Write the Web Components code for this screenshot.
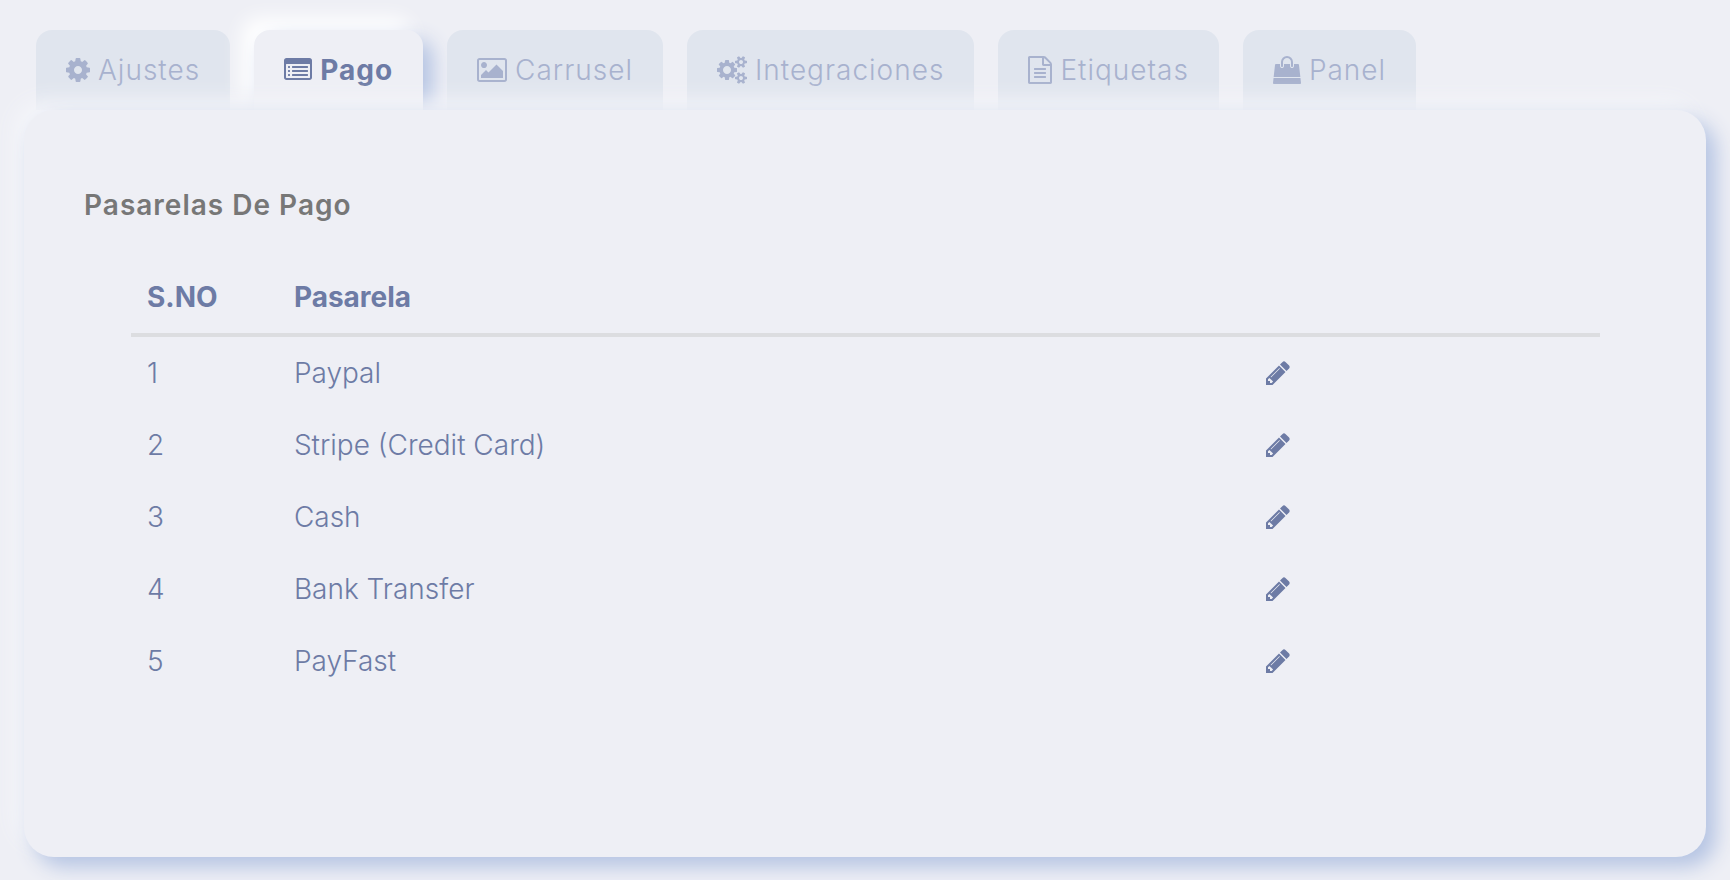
<!DOCTYPE html>
<html lang="es">
<head>
<meta charset="utf-8">
<meta name="viewport" content="width=device-width, initial-scale=1">
<title>Pasarelas De Pago</title>
<style>
    body {
        --bg: #eeeff5;
        --tab: #e0e5ee;
        --muted: #a8b2ce;
        --accent: #6d7ba5;
        --shade: #b5c4e3;
        --glow: #f4f5f9;
        margin: 0;
        background: var(--bg);
        color: var(--accent);
        font-family: Inter, "Open Sans", sans-serif;
        font-size: 28px;
        line-height: 40px;
        font-weight: 300;
    }
</style>
</head>
<body>
<settings-page>
    <tab-bar slot="tabs">
        <tab-item icon="cog">Ajustes</tab-item>
        <tab-item icon="list" selected>Pago</tab-item>
        <tab-item icon="image">Carrusel</tab-item>
        <tab-item icon="cogs">Integraciones</tab-item>
        <tab-item icon="file">Etiquetas</tab-item>
        <tab-item icon="bag">Panel</tab-item>
    </tab-bar>
    <tab-panel>
        <span slot="title">Pasarelas De Pago</span>
        <gateway-table data='["Paypal", "Stripe (Credit Card)", "Cash", "Bank Transfer", "PayFast"]'></gateway-table>
    </tab-panel>
</settings-page>

<script>
// [viewBox, width, height, path]
const smallCog = "v140q0 16-149 31-12 27-30 52 51 113 51 138 0 4-4 7-122 71-124 71-8 0-46-47t-52-68q-20 2-30 2t-30-2q-14 21-52 68t-46 47q-2 0-124-71-4-3-4-7 0-25 51-138-18-25-30-52-149-15-149-31v-140q0-16 149-31 13-29 30-52-51-113-51-138 0-4 4-7 4-2 35-20t59-34 30-16q8 0 46 46.5t52 67.5q20-2 30-2t30 2q51-71 92-112l6-2q4 0 124 70 4 3 4 7 0 25-51 138 17 23 30 52 149 15 149 31z"
const dot = "v64q0 13-9.5 22.5t-22.5 9.5h-64q-13 0-22.5-9.5t-9.5-22.5v-64q0-13 9.5-22.5t22.5-9.5h64q13 0 22.5 9.5t9.5 22.5z"
const bar = "v64q0 13-9.5 22.5t-22.5 9.5h-960q-13 0-22.5-9.5t-9.5-22.5v-64q0-13 9.5-22.5t22.5-9.5h960q13 0 22.5 9.5t9.5 22.5z"
const line = "q14 0 23 9t9 23v64q0 14-9 23t-23 9h-704q-14 0-23-9t-9-23v-64q0-14 9-23t23-9h704z"

const ICONS = {
    cog: ["128 0 1536 1792", 24, 28, "M1152 896q0-106-75-181t-181-75-181 75-75 181 75 181 181 75 181-75 75-181zm512-109v222q0 12-8 23t-20 13l-185 28q-19 54-39 91 35 50 107 138 10 12 10 25t-9 23q-27 37-99 108t-94 71q-12 0-26-9l-138-108q-44 23-91 38-16 136-29 186-7 28-36 28h-222q-14 0-24.5-8.5t-11.5-21.5l-28-184q-49-16-90-37l-141 107q-10 9-25 9-14 0-25-11-126-114-165-168-7-10-7-23 0-12 8-23 15-21 51-66.5t54-70.5q-27-50-41-99l-183-27q-13-2-21-12.5t-8-23.5v-222q0-12 8-23t19-13l186-28q14-46 39-92-40-57-107-138-10-12-10-24 0-10 9-23 26-36 98.5-107.5t94.5-71.5q13 0 26 10l138 107q44-23 91-38 16-136 29-186 7-28 36-28h222q14 0 24.5 8.5t11.5 21.5l28 184q49 16 90 37l142-107q9-9 24-9 13 0 25 10 129 119 165 170 7 8 7 22 0 12-8 23-15 21-51 66.5t-54 70.5q26 50 41 98l183 28q13 2 21 12.5t8 23.5z"],
    list: ["0 0 1792 1792", 28, 28, `M384 1184${dot}M384 928${dot}M384 672${dot}M1536 1184${bar}M1536 928${bar}M1536 672${bar}M1664 1376v-832q0-13-9.5-22.5t-22.5-9.5h-1472q-13 0-22.5 9.5t-9.5 22.5v832q0 13 9.5 22.5t22.5 9.5h1472q13 0 22.5-9.5t9.5-22.5zm128-1088v1088q0 66-47 113t-113 47h-1472q-66 0-113-47t-47-113v-1088q0-66 47-113t113-47h1472q66 0 113 47t47 113z`],
    image: ["0 -128 1920 1792", 30, 28, "M640 448q0 80-56 136t-136 56-136-56-56-136 56-136 136-56 136 56 56 136zm1024 384v448h-1408v-192l320-320 160 160 512-512zm96-704h-1600q-13 0-22.5 9.5t-9.5 22.5v1216q0 13 9.5 22.5t22.5 9.5h1600q13 0 22.5-9.5t9.5-22.5v-1216q0-13-9.5-22.5t-22.5-9.5zm160 32v1216q0 66-47 113t-113 47h-1600q-66 0-113-47t-47-113v-1216q0-66 47-113t113-47h1600q66 0 113 47t47 113z"],
    cogs: ["0 -64 1920 1792", 30, 28, `M896 832q0-106-75-181t-181-75-181 75-75 181 75 181 181 75 181-75 75-181zm768 512q0-52-38-90t-90-38-90 38-38 90q0 53 37.5 90.5t90.5 37.5 90.5-37.5 37.5-90.5zm0-1024q0-52-38-90t-90-38-90 38-38 90q0 53 37.5 90.5t90.5 37.5 90.5-37.5 37.5-90.5zm-384 421v185q0 10-7 19.5t-16 10.5l-155 24q-11 35-32 76 34 48 90 115 7 11 7 20 0 12-7 19-23 30-82.5 89.5t-78.5 59.5q-11 0-21-7l-115-90q-37 19-77 31-11 108-23 155-7 24-30 24h-186q-11 0-20-7.5t-10-17.5l-23-153q-34-10-75-31l-118 89q-7 7-20 7-11 0-21-8-144-133-144-160 0-9 7-19 10-14 41-53t47-61q-23-44-35-82l-152-24q-10-1-17-9.5t-7-19.5v-185q0-10 7-19.5t16-10.5l155-24q11-35 32-76-34-48-90-115-7-11-7-20 0-12 7-20 22-30 82-89t79-59q11 0 21 7l115 90q34-18 77-32 11-108 23-154 7-24 30-24h186q11 0 20 7.5t10 17.5l23 153q34 10 75 31l118-89q8-7 20-7 11 0 21 8 144 133 144 160 0 8-7 19-12 16-42 54t-45 60q23 48 34 82l152 23q10 2 17 10.5t7 19.5zM1920 1274${smallCog}M1920 250${smallCog}`],
    file: ["0 0 1536 1792", 24, 28, `M1468 380q28 28 48 76t20 88v1152q0 40-28 68t-68 28h-1344q-40 0-68-28t-28-68v-1600q0-40 28-68t68-28h896q40 0 88 20t76 48zm-444-244v376h376q-10-29-22-41l-313-313q-12-12-41-22zm384 1528v-1024h-416q-40 0-68-28t-28-68v-416h-768v1536h1280zM1120 768${line}M1120 1024${line}M1120 1280${line}`],
    bag: ["0 0 1792 1792", 28, 28, "M1757 1408l35 313q3 28-16 50-19 21-48 21h-1664q-29 0-48-21-19-22-16-50l35-313h1722zm-93-839l86 775h-1708l86-775q3-24 21-40.5t43-16.5h256v128q0 53 37.5 90.5t90.5 37.5 90.5-37.5 37.5-90.5v-128h384v128q0 53 37.5 90.5t90.5 37.5 90.5-37.5 37.5-90.5v-128h256q25 0 43 16.5t21 40.5zm-384-185v256q0 26-19 45t-45 19-45-19-19-45v-256q0-106-75-181t-181-75-181 75-75 181v256q0 26-19 45t-45 19-45-19-19-45v-256q0-159 112.5-271.5t271.5-112.5 271.5 112.5 112.5 271.5z"],
    pencil: ["128 0 1536 1792", 24, 28, "M491 1536l91-91-235-235-91 91v107h128v128h107zm523-928q0-22-22-22-10 0-17 7l-542 542q-7 7-7 17 0 22 22 22 10 0 17-7l542-542q7-7 7-17zm-54-192l416 416-832 832h-416v-416zm683 96q0 53-37 90l-166 166-416-416 166-165q36-38 90-38 53 0 91 38l235 234q37 39 37 91z"]
}

class FontIcon extends HTMLElement {
    connectedCallback() {
        if (this.shadowRoot) return
        const [box, width, height, path] = ICONS[this.getAttribute("name")]
        this.attachShadow({ mode: "open" }).innerHTML = `
        <style>
            :host { display: inline-flex; flex: none; }
            svg { display: block; fill: currentColor; fill-rule: evenodd; }
        </style>
        <svg viewBox="${box}" width="${width}" height="${height}" aria-hidden="true"><path d="${path}"/></svg>
        `
    }
}

customElements.define("font-icon", FontIcon)

class SettingsPage extends HTMLElement {
    constructor() {
        super()
        this.attachShadow({ mode: "open" }).innerHTML = `
        <style>
            :host {
                display: flex;
                flex-direction: column;
                box-sizing: border-box;
                min-height: 100vh;
                padding: 30px 24px 23px;
                overflow: hidden;
            }
        </style>
        <slot name="tabs"></slot>
        <slot></slot>
        `
    }
}

customElements.define("settings-page", SettingsPage)

class TabBar extends HTMLElement {
    constructor() {
        super()
        this.attachShadow({ mode: "open" }).innerHTML = `
        <style>
            :host {
                display: flex;
                flex-wrap: wrap;
                gap: 0 24px;
                padding: 0 12px;
            }
        </style>
        <slot></slot>
        `
        this.addEventListener("click", e => {
            const item = e.target.closest("tab-item")
            if (!item) return
            this.querySelectorAll("tab-item").forEach(tab => tab.toggleAttribute("selected", tab === item))
        })
    }
}

customElements.define("tab-bar", TabBar)

class TabItem extends HTMLElement {
    constructor() {
        super()
        this.attachShadow({ mode: "open" }).innerHTML = `
        <style>
            :host { display: block; }
            button {
                display: flex;
                align-items: center;
                gap: 8px;
                height: 80px;
                padding: 0 30px;
                border: 0;
                border-radius: 16px 16px 0 0;
                background: var(--tab);
                color: var(--muted);
                font: inherit;
                letter-spacing: 1px;
                cursor: pointer;
            }
            :host([selected]) button {
                background: var(--bg);
                color: var(--accent);
                font-weight: 700;
                box-shadow: 10px 10px 20px var(--shade), -12px -12px 20px #fff;
            }
        </style>
        <button type="button">
            <font-icon name="${this.getAttribute("icon")}"></font-icon>
            <span><slot></slot></span>
        </button>
        `
    }
}

customElements.define("tab-item", TabItem)

class TabPanel extends HTMLElement {
    constructor() {
        super()
        this.attachShadow({ mode: "open" }).innerHTML = `
        <style>
            /* position keeps the glow above the tabs */
            :host {
                display: block;
                position: relative;
                flex: 1;
                padding: 75px 60px 60px;
                border-radius: 30px;
                background: var(--bg);
                box-shadow: 10px 10px 20px var(--shade), -10px -10px 20px var(--glow);
            }
            h2 {
                margin: 0 0 36px;
                color: #777;
                font-size: 28px;
                line-height: 40px;
                font-weight: 600;
                letter-spacing: 1px;
            }
            .content { padding: 0 46px 0 47px; }
        </style>
        <h2><slot name="title"></slot></h2>
        <div class="content"><slot></slot></div>
        `
    }
}

customElements.define("tab-panel", TabPanel)

class GatewayTable extends HTMLElement {
    constructor() {
        super()
        const rows = JSON.parse(this.getAttribute("data")).map((name, index) => `
            <tr>
                <td>${index + 1}</td>
                <td>${name}</td>
                <td><button type="button" aria-label="Editar ${name}"><font-icon name="pencil"></font-icon></button></td>
            </tr>
        `).join("")
        this.attachShadow({ mode: "open" }).innerHTML = `
        <style>
            :host { display: block; }
            table {
                width: 100%;
                table-layout: fixed;
                border-collapse: separate;
                border-spacing: 0;
            }
            th, td {
                box-sizing: border-box;
                padding: 16px;
                text-align: left;
                vertical-align: middle;
            }
            th {
                border-bottom: 4px solid #dcdde0;
                font-weight: 700;
            }
            th:first-child { width: 10%; }
            th:last-child { width: 350px; }
            button {
                display: flex;
                padding: 0;
                border: 0;
                background: none;
                color: inherit;
                cursor: pointer;
            }
        </style>
        <table>
            <thead><tr><th>S.NO</th><th>Pasarela</th><th></th></tr></thead>
            <tbody>${rows}</tbody>
        </table>
        `
    }
}

customElements.define("gateway-table", GatewayTable)
</script>
</body>
</html>
